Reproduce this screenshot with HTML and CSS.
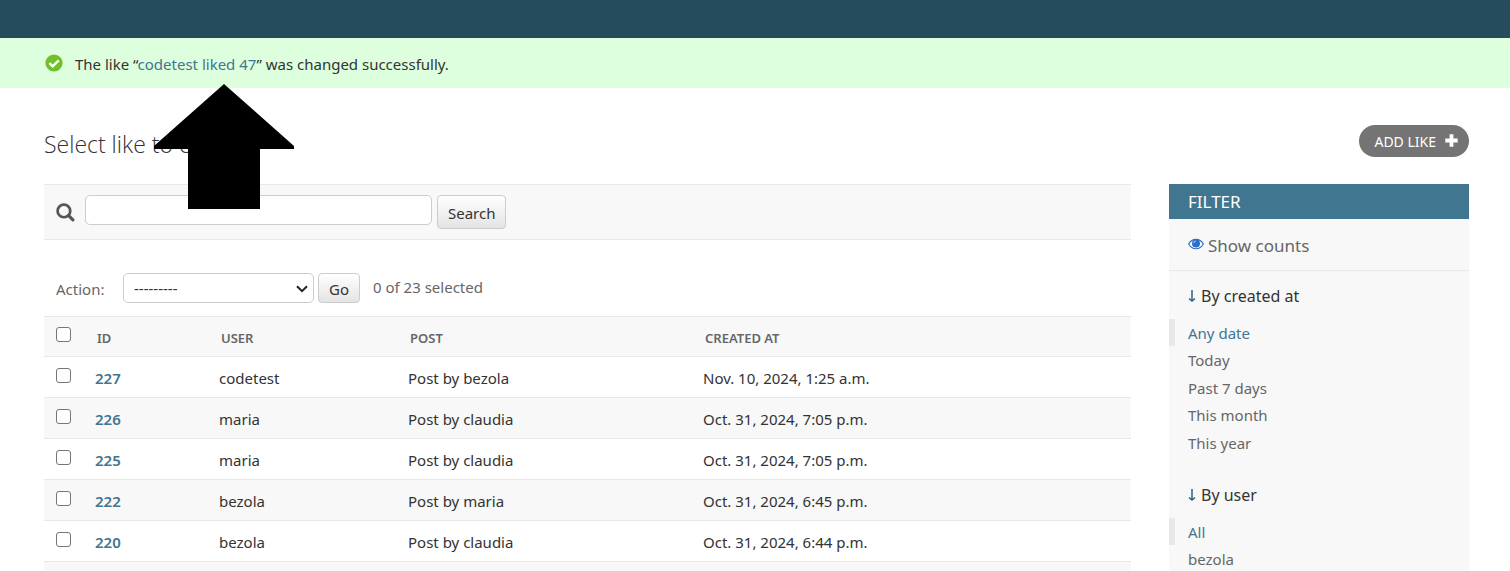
FILE: index.html
```html
<!DOCTYPE html>
<html lang="en">
<head>
<meta charset="utf-8">
<title>Select like to change</title>
<link rel="stylesheet" href="styles.css">
</head>
<body>
<header class="header"></header>
<div class="message">
  <svg class="message-icon" viewBox="0 0 18 18" aria-hidden="true"><circle cx="9" cy="9" r="8.6" fill="#70bf2b"/><path d="M4.4 9.1l3.3 3.2 6-6" fill="none" stroke="#fff" stroke-width="2.5"/></svg>
  <p class="message-text">The like “<a href="#">codetest liked 47</a>” was changed successfully.</p>
</div>
<svg class="pointer" viewBox="0 0 140 125" aria-hidden="true"><path d="M70 0L140 62V65H106V125H34V65H0V62Z"/></svg>
<main class="content">
  <div class="title-row">
    <h1 class="title">Select like to change</h1>
    <a class="add" href="#">ADD LIKE
      <svg class="add-icon" viewBox="0 0 13 13" aria-hidden="true"><path d="M6.500 0.300V12.700M0.300 6.500H12.700" stroke="#fff" stroke-width="3.800"/></svg>
    </a>
  </div>
  <div class="columns">
    <div class="list">
      <form class="search">
        <label class="search-label" for="q" aria-label="Search likes">
          <svg class="search-icon" viewBox="0 0 18 18" aria-hidden="true"><circle cx="7.500" cy="7.500" r="6" fill="none" stroke="#555" stroke-width="2.600"/><path d="M11.800 11.800l4.200 4.200" stroke="#555" stroke-width="3" stroke-linecap="round"/></svg>
        </label>
        <input class="field search-field" id="q" type="text">
        <button class="button search-button" type="button">Search</button>
      </form>
      <div class="actions">
        <label class="action-label" for="action">Action:</label>
        <div class="select-wrap">
          <select class="field action-select" id="action"><option>---------</option></select>
          <svg class="chevron" viewBox="0 0 12 8" aria-hidden="true"><path d="M1 1.200l5 5 5-5" fill="none" stroke="#222" stroke-width="2"/></svg>
        </div>
        <button class="button" type="button">Go</button>
        <span class="counter">0 of 23 selected</span>
      </div>
      <table class="results">
        <colgroup><col class="col-check"><col class="col-id"><col class="col-user"><col class="col-post"><col></colgroup>
        <thead>
          <tr><th class="check-cell"><input class="check" type="checkbox" aria-label="Select all"></th><th>ID</th><th>USER</th><th>POST</th><th>CREATED AT</th></tr>
        </thead>
        <tbody>
          <tr><td class="check-cell"><input class="check" type="checkbox" aria-label="Select 227"></td><td><a class="id" href="#">227</a></td><td>codetest</td><td>Post by bezola</td><td>Nov. 10, 2024, 1:25 a.m.</td></tr>
          <tr><td class="check-cell"><input class="check" type="checkbox" aria-label="Select 226"></td><td><a class="id" href="#">226</a></td><td>maria</td><td>Post by claudia</td><td>Oct. 31, 2024, 7:05 p.m.</td></tr>
          <tr><td class="check-cell"><input class="check" type="checkbox" aria-label="Select 225"></td><td><a class="id" href="#">225</a></td><td>maria</td><td>Post by claudia</td><td>Oct. 31, 2024, 7:05 p.m.</td></tr>
          <tr><td class="check-cell"><input class="check" type="checkbox" aria-label="Select 222"></td><td><a class="id" href="#">222</a></td><td>bezola</td><td>Post by maria</td><td>Oct. 31, 2024, 6:45 p.m.</td></tr>
          <tr><td class="check-cell"><input class="check" type="checkbox" aria-label="Select 220"></td><td><a class="id" href="#">220</a></td><td>bezola</td><td>Post by claudia</td><td>Oct. 31, 2024, 6:44 p.m.</td></tr>
          <tr><td class="check-cell"></td><td></td><td></td><td></td><td></td></tr>
        </tbody>
      </table>
    </div>
    <aside class="filter">
      <h2 class="filter-title">FILTER</h2>
      <a class="counts" href="#">
        <svg class="eye" viewBox="0 0 16 12" aria-hidden="true"><path d="M.7 6C4-.3 12-.3 15.300 6 12 12.300 4 12.300.7 6Z" fill="#fff" stroke="#2b70c5" stroke-width="1.200"/><circle cx="8" cy="5.400" r="4" fill="#2b70c5"/><path d="M5.800 5.200A2.200 2.200 0 0 1 8 3" fill="none" stroke="#b9d2f0" stroke-width="1"/></svg>
        Show counts
      </a>
      <details class="group" open>
        <summary class="group-title"><svg class="down" viewBox="0 0 8 12" aria-hidden="true"><path d="M4 0V10.500M1 8.500L4 11l3-2.500" fill="none" stroke="#2f6280" stroke-width="1.500"/></svg>By created at</summary>
        <ul class="options">
          <li class="option selected"><a href="#">Any date</a></li>
          <li class="option"><a href="#">Today</a></li>
          <li class="option"><a href="#">Past 7 days</a></li>
          <li class="option"><a href="#">This month</a></li>
          <li class="option"><a href="#">This year</a></li>
        </ul>
      </details>
      <details class="group" open>
        <summary class="group-title"><svg class="down" viewBox="0 0 8 12" aria-hidden="true"><path d="M4 0V10.500M1 8.500L4 11l3-2.500" fill="none" stroke="#2f6280" stroke-width="1.500"/></svg>By user</summary>
        <ul class="options">
          <li class="option selected"><a href="#">All</a></li>
          <li class="option"><a href="#">bezola</a></li>
        </ul>
      </details>
    </aside>
  </div>
</main>
</body>
</html>
```
FILE: styles.css
```css
* { box-sizing: border-box; }
html, body { height: 100%; }
body {
  margin: 0;
  overflow: hidden;
  position: relative;
  background: #fff;
  color: #333;
  font: 15px/20px "Segoe UI", "Noto Sans", "Open Sans", sans-serif;
}
a { color: #417690; text-decoration: none; }
svg { display: block; flex: none; }
.header { height: 38px; background: #264b5d; }
.message {
  display: flex;
  align-items: center;
  gap: 12px;
  height: 50px;
  padding: 0 45px;
  background: #dfd;
}
.message-icon { width: 18px; height: 18px; }
.message-text { margin: 0; padding-top: 2px; }
.pointer { position: absolute; left: 154px; top: 84px; width: 140px; height: 125px; }
.content { padding: 36px 41px 0 44px; }
.title-row { display: flex; justify-content: space-between; height: 60px; }
.title {
  margin: 0;
  padding-top: 4px;
  font-family: "Segoe UI", "Open Sans", sans-serif;
  font-size: 23px;
  line-height: 32px;
  font-weight: 300;
}
.add {
  display: flex;
  align-items: center;
  gap: 9px;
  height: 32px;
  margin-top: 1px;
  padding: 2px 11px 0 15px;
  border-radius: 16px;
  background: #747474;
  color: #fff;
  font-size: 14px;
}
.add-icon { width: 13px; height: 13px; margin-bottom: 4px; }
.columns { display: flex; gap: 38px; align-items: flex-start; }
.list { flex: 1; min-width: 0; }
.search {
  display: flex;
  align-items: flex-start;
  height: 56px;
  padding: 10px 12px;
  background: #f8f8f8;
  border-top: 1px solid #e8e8e8;
  border-bottom: 1px solid #e8e8e8;
}
.search-label { width: 29px; padding-top: 8px; }
.search-icon { width: 19px; height: 19px; }
.field {
  height: 30px;
  margin: 0;
  border: 1px solid #ccc;
  border-radius: 5px;
  background: #fff;
  color: #333;
  font: inherit;
}
.search-field { width: 347px; margin-right: 5px; padding: 2px 6px; }
.button {
  height: 30px;
  padding: 2px 10px 0;
  border: 1px solid #ccc;
  border-radius: 4px;
  background: linear-gradient(#fff, #e4e4e4);
  color: #333;
  font: inherit;
}
.search-button { height: 34px; }
.actions { display: flex; align-items: center; height: 76px; padding: 20px 12px 0; }
.actions .button { margin-left: 4px; }
.action-label { width: 67px; padding-top: 2px; color: #666; }
.select-wrap { position: relative; }
.action-select { width: 191px; padding: 0 10px; appearance: none; display: block; }
.chevron { position: absolute; right: 6px; top: 12px; width: 12px; height: 8px; pointer-events: none; }
.counter { padding: 0 0 2px 13px; color: #666; }
.results { width: 100%; table-layout: fixed; border-collapse: separate; border-spacing: 0; }
.col-check { width: 43px; }
.col-id { width: 124px; }
.col-user { width: 189px; }
.col-post { width: 295px; }
th, td { border-bottom: 1px solid #e8e8e8; text-align: left; }
th {
  height: 41px;
  padding: 2px 10px 0;
  border-top: 1px solid #e8e8e8;
  background: #f8f8f8;
  color: #666;
  font-size: 13px;
  font-weight: 600;
}
td { height: 41px; padding: 2px 8px 0; }
tbody tr:nth-child(even) td { background: #f8f8f8; }
th.check-cell, td.check-cell { padding: 0 0 4px 12px; }
.check {
  display: block;
  appearance: none;
  width: 15px;
  height: 15px;
  margin: 0;
  border: 1px solid #767676;
  border-radius: 3px;
  background: #fff;
}
.id { font-weight: 600; }
.filter { width: 300px; min-height: 420px; flex: none; background: #f8f8f8; }
.filter-title {
  margin: 0;
  padding: 3px 19px 2px;
  background: #417690;
  color: #fff;
  font-size: 17px;
  line-height: 30px;
  font-weight: 400;
}
.counts {
  display: flex;
  align-items: center;
  gap: 4px;
  height: 52px;
  padding: 3px 19px 0;
  border-bottom: 1px solid #e8e8e8;
  color: #666;
  font-size: 17px;
}
.eye { width: 16px; height: 12px; margin-bottom: 5px; }
.group { padding-top: 14px; margin-bottom: 14px; }
.group-title {
  display: flex;
  align-items: center;
  gap: 5px;
  height: 22px;
  padding: 0 19px;
  list-style: none;
  font-size: 16px;
}
.group-title::-webkit-details-marker { display: none; }
.down { width: 8px; height: 12px; }
.options { margin: 0; padding: 12px 0 0; list-style: none; }
.option { height: 27px; padding: 4px 0 0 19px; }
.option:nth-child(even) { height: 28px; }
.option a { color: #666; }
.option.selected { padding-left: 13px; border-left: 6px solid #e8e8e8; }
.option.selected a { color: #417690; }
```
